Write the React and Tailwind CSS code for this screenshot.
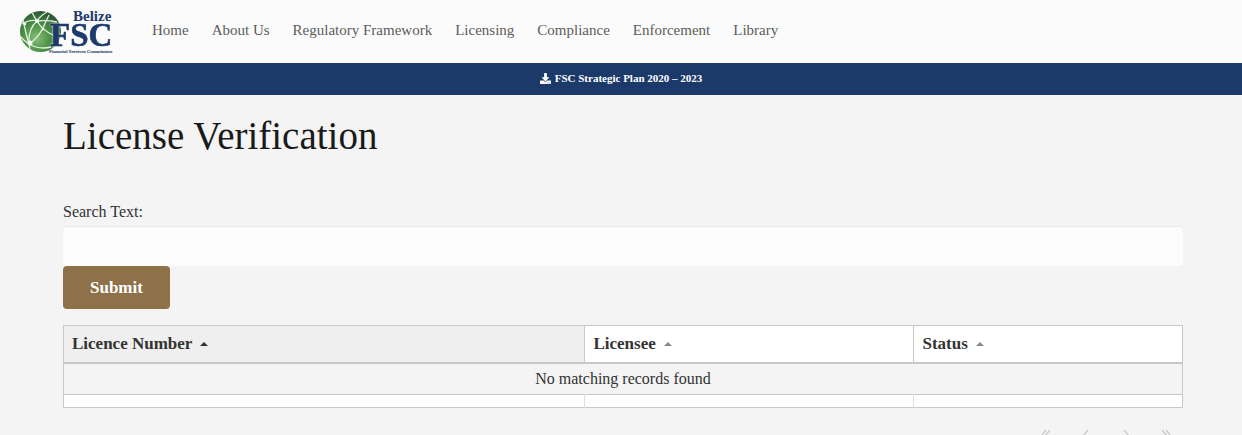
import { FaDownload } from "react-icons/fa";

const links = ["Home", "About Us", "Regulatory Framework", "Licensing", "Compliance", "Enforcement", "Library"];

const columns = [
  { name: "Licence Number", active: true },
  { name: "Licensee", active: false },
  { name: "Status", active: false },
];

function Logo() {
  return (
    <svg viewBox="0 0 96 46" className="block h-[46px] w-24" role="img" aria-label="Belize Financial Services Commission">
      <defs>
        <radialGradient id="globe" cx="0.4" cy="0.66" r="0.64">
          <stop offset="0" stopColor="#86bf78" />
          <stop offset="0.5" stopColor="#4d9247" />
          <stop offset="1" stopColor="#2b5a35" />
        </radialGradient>
        <clipPath id="globe-clip">
          <circle cx="21.5" cy="21.5" r="20.5" />
        </clipPath>
      </defs>
      <g transform="translate(0 1)">
        <circle cx="21.5" cy="21.5" r="20.5" fill="url(#globe)" />
        <g clipPath="url(#globe-clip)" fill="none" stroke="#e3f0df" strokeWidth="1.3">
          <path d="M3 14 Q12 9 18 11 Q28 10 38 12" />
          <path d="M18 11 Q9 19 10 34 L12 43" />
          <path d="M4 10 Q7 24 10 34" />
          <path d="M18 11 Q23 20 34 25" />
          <path d="M1 26 Q5 31 10 34 Q19 28 24 18 Q27 11 30 5" />
          <path d="M13 2 Q15 7 18 11 Q21 6 28 2" />
          <path d="M10 34 Q20 40 32 37" />
        </g>
        <g fill="#f4faf2">
          <circle cx="18" cy="11" r="2" />
          <circle cx="11" cy="33" r="2.5" />
          <circle cx="6" cy="14" r="1.3" />
          <circle cx="24" cy="19" r="1.3" />
        </g>
      </g>
      <g fill="#1d3a6b" fontFamily="Liberation Serif, serif" fontWeight="700">
        <text x="54" y="12" fontSize="15">Belize</text>
        <text x="31" y="37" fontSize="33" stroke="#1d3a6b" strokeWidth="0.6" className="drop-shadow-[0_0_1px_#fff]">FSC</text>
        <text x="30" y="44" fontSize="5" fontWeight="400" stroke="#1d3a6b" strokeWidth="0.15">Financial Services Commission</text>
      </g>
    </svg>
  );
}

function Chevron({ label, d }) {
  return (
    <button type="button" aria-label={label} className="flex w-[41px] justify-center">
      <svg viewBox="0 0 12 14" className="h-3.5 w-3" fill="none" stroke="#c8c8cc" strokeWidth="1.3">
        <path d={d} />
      </svg>
    </button>
  );
}

export default function App() {
  return (
    <div className="flex h-screen flex-col overflow-hidden bg-[#f4f4f4] font-['Liberation_Serif',serif] text-[#333]">
      <header className="flex h-[63px] shrink-0 items-center gap-[37px] bg-[#fbfbfb] pl-[19px]">
        <a href="#home">
          <Logo />
        </a>
        <nav className="flex gap-[23px] pb-1 text-[15px] leading-5 text-[#5c5c5c]">
          {links.map((name) => (
            <a key={name} href="#page" className="whitespace-nowrap">{name}</a>
          ))}
        </nav>
      </header>
      <div className="flex h-8 shrink-0 items-center justify-center bg-[#1c3a69] pb-0.5 text-[11px] font-bold text-white">
        <a href="#plan" className="flex items-center gap-1">
          <FaDownload className="size-[11px]" />
          FSC Strategic Plan 2020 – 2023
        </a>
      </div>
      <main className="pr-[59px] pl-[63px]">
        <h1 className="pt-[17px] text-[39px] leading-12 text-[#1a1a1a]">License Verification</h1>
        <form className="pt-[42px]" onSubmit={(e) => e.preventDefault()}>
          <label htmlFor="search" className="block text-base leading-5">Search Text:</label>
          <input
            id="search"
            type="text"
            className="mt-1 block h-10 w-full rounded-sm border-t border-[#e9e9e9] bg-[#fcfcfc] px-3"
          />
          <button type="submit" className="block rounded-sm bg-[#8e7149] px-[27px] py-[11px] text-[17px] leading-[21px] font-bold text-white">
            Submit
          </button>
        </form>
        <table className="mt-4 w-full table-fixed border-collapse border border-[#c8c8c8]">
          <colgroup>
            <col className="w-[46.6%]" />
            <col className="w-[29.4%]" />
            <col className="w-[24%]" />
          </colgroup>
          <thead>
            <tr className="border-b-2 border-[#c8c8c8] bg-white">
              {columns.map(({ name, active }) => (
                <th
                  key={name}
                  scope="col"
                  className={active ? "border-r border-[#c8c8c8] bg-[#efefef] px-2 py-2 text-left" : "border-r border-[#c8c8c8] px-2 py-2 text-left"}
                >
                  <button type="button" className="flex items-center gap-2 text-[17px] leading-5 font-bold">
                    {name}
                    <svg viewBox="0 0 8 4" className={active ? "h-1 w-2 fill-[#333]" : "h-1 w-2 fill-[#888]"} aria-hidden="true">
                      <path d="M0 4 4 0 8 4Z" />
                    </svg>
                  </button>
                </th>
              ))}
            </tr>
          </thead>
          <tbody>
            <tr className="border-b border-[#c8c8c8]">
              <td colSpan={3} className="py-[5px] text-center text-base leading-5">No matching records found</td>
            </tr>
            <tr className="h-[13px] bg-white">
              <td className="border-r border-[#ddd]" />
              <td className="border-r border-[#ddd]" />
              <td />
            </tr>
          </tbody>
        </table>
        <nav aria-label="Pagination" className="mt-[21px] -mr-1 flex justify-end">
          <Chevron label="First page" d="M8 1 3 7 8 13M12 1 7 7 12 13" />
          <Chevron label="Previous page" d="M9 1 4 7 9 13" />
          <Chevron label="Next page" d="M4 1 9 7 4 13" />
          <Chevron label="Last page" d="M1 1 6 7 1 13M5 1 10 7 5 13" />
        </nav>
      </main>
    </div>
  );
}
